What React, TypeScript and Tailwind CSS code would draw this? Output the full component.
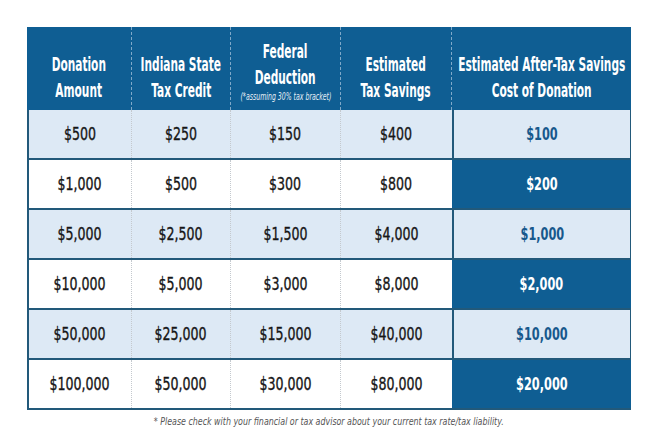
import React from "react";

const rows = [
  ["$500", "$250", "$150", "$400", "$100"],
  ["$1,000", "$500", "$300", "$800", "$200"],
  ["$5,000", "$2,500", "$1,500", "$4,000", "$1,000"],
  ["$10,000", "$5,000", "$3,000", "$8,000", "$2,000"],
  ["$50,000", "$25,000", "$15,000", "$40,000", "$10,000"],
  ["$100,000", "$50,000", "$30,000", "$80,000", "$20,000"],
];

const font = { fontFamily: '"DejaVu Sans Condensed", "Liberation Sans", sans-serif' };

function HeadCell({ lines, small, last }: { lines: string[]; small?: string; last?: boolean }) {
  return (
    <div
      className={`flex flex-col items-center justify-end text-white ${small ? "pb-[6px]" : "pb-[7px]"} ${last ? "" : "border-r border-dashed border-[#7fa9c9]"}`}
    >
      {lines.map((l) => (
        <div key={l} className="whitespace-nowrap text-[19px] font-bold leading-[26px] scale-x-[0.62]">
          {l}
        </div>
      ))}
      {small && (
        <div className="whitespace-nowrap text-[10px] italic leading-[14px] scale-x-[0.69] text-[#e6eef6]">{small}</div>
      )}
    </div>
  );
}

export default function App() {
  return (
    <div className="w-[659px] h-[439px] bg-white pt-[27px] pl-[27px]" style={font}>
      <div className="w-[604px]">
        <div className="grid grid-cols-[105px_99px_110px_111px_179px] h-[83px] bg-[#0f5e93]">
          <HeadCell lines={["Donation", "Amount"]} />
          <HeadCell lines={["Indiana State", "Tax Credit"]} />
          <HeadCell lines={["Federal", "Deduction"]} small="(*assuming 30% tax bracket)" />
          <HeadCell lines={["Estimated", "Tax Savings"]} />
          <HeadCell lines={["Estimated After-Tax Savings", "Cost of Donation"]} last />
        </div>
        <div className="border-l-2 border-[#22597a]">
          {rows.map((r, i) => {
            const light = i % 2 === 0;
            return (
              <div
                key={i}
                className={`grid grid-cols-[103px_99px_110px_111px_179px] h-[50px] border-b-2 border-[#22597a] ${light ? "bg-[#dde9f5]" : "bg-white"}`}
              >
                {r.slice(0, 4).map((v, j) => (
                  <div
                    key={j}
                    className={`flex items-center justify-center ${j < 3 ? "border-r border-dotted border-[#c4c9ce]" : ""}`}
                  >
                    <span className="block whitespace-nowrap text-[17.5px] text-[#161616] [-webkit-text-stroke:0.35px] scale-x-[0.8]">{v}</span>
                  </div>
                ))}
                <div
                  className={`flex items-center justify-center ${light ? "bg-[#dde9f5] text-[#17588c] border-l-2 border-r border-[#22597a]" : "bg-[#0f5e93] text-white"}`}
                >
                  <span className="block whitespace-nowrap text-[17.5px] font-bold scale-x-[0.72]">{r[4]}</span>
                </div>
              </div>
            );
          })}
        </div>
        <div className="flex justify-center pt-[5px]">
          <div className="whitespace-nowrap text-[11px] italic text-[#555] leading-[14px] scale-x-[0.8]">
            * Please check with your financial or tax advisor about your current tax rate/tax liability.
          </div>
        </div>
      </div>
    </div>
  );
}
